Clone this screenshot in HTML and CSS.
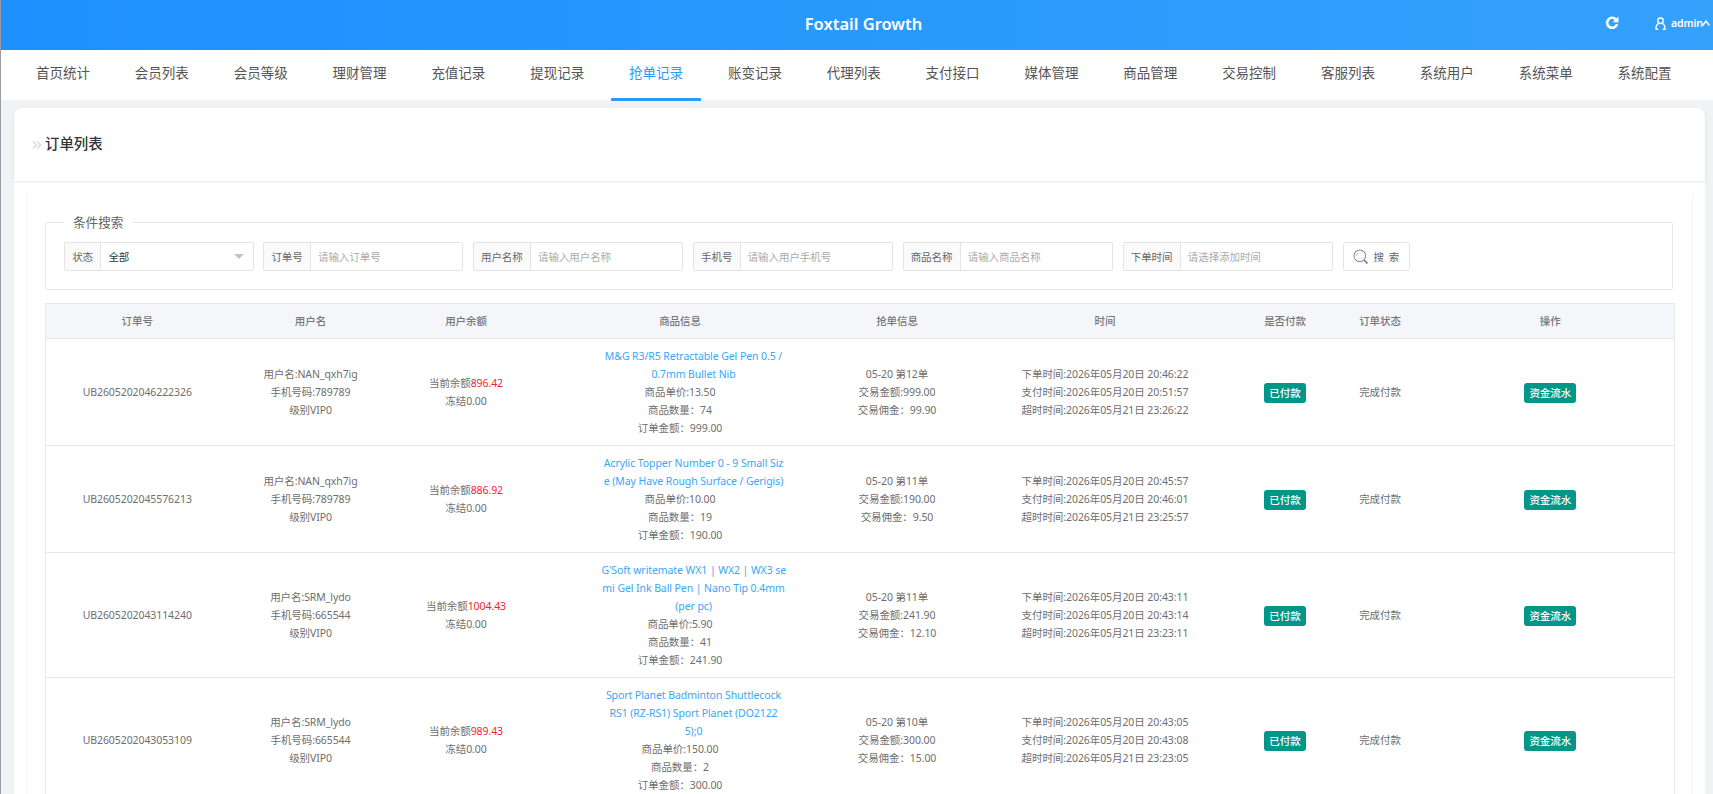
FILE: index.html
```html
<!DOCTYPE html>
<html lang="zh-CN">
<head>
  <meta charset="UTF-8">
  <title>Foxtail Growth</title>
  <link rel="stylesheet" href="styles.css">
</head>
<body>
  <div class="app">
    <header class="topbar">
      <div class="brand">Foxtail Growth</div>
      <div class="top-actions">
        <svg class="icon-refresh" viewBox="0 0 14 14"><path d="M11 3.600A5 5 0 1 0 12 8" fill="none" stroke="#fff" stroke-width="2.600"/><path d="M7.500 6.200h6V.5z" fill="#fff"/></svg>
        <svg class="icon-user" viewBox="0 0 12 14"><circle cx="6" cy="4" r="3" fill="none" stroke="#fff" stroke-width="1.500"/><path d="M1 13.500c0-3.500 1.600-6 3-6.600M11 13.500c0-3.500-1.600-6-3-6.600M1 13.300h2.500M8.500 13.300H11" fill="none" stroke="#fff" stroke-width="1.500"/></svg>
        <span class="user-name">admin</span>
        <svg class="icon-caret" viewBox="0 0 8 8"><path d="M.7 6.500 4 2l3.300 4.500" fill="none" stroke="#fff" stroke-width="1.500"/></svg>
      </div>
    </header>

    <nav class="tabs">
      <a>首页统计</a>
      <a>会员列表</a>
      <a>会员等级</a>
      <a>理财管理</a>
      <a>充值记录</a>
      <a>提现记录</a>
      <a class="active">抢单记录</a>
      <a>账变记录</a>
      <a>代理列表</a>
      <a>支付接口</a>
      <a>媒体管理</a>
      <a>商品管理</a>
      <a>交易控制</a>
      <a>客服列表</a>
      <a>系统用户</a>
      <a>系统菜单</a>
      <a>系统配置</a>
    </nav>

    <main class="content">
      <div class="card-head">
        <svg class="crumb" viewBox="0 0 10 10"><path d="M1 1.500 4.500 5 1 8.500M5 1.500 8.500 5 5 8.500" fill="none" stroke="#b5b5b5" stroke-width="1"/></svg>
        <h1>订单列表</h1>
      </div>
      <div class="card-body">
        <div class="panel">
          <fieldset class="search">
            <legend>条件搜索</legend>
            <div class="search-row">
              <div class="field">
                <span class="field-label">状态</span>
                <div class="field-input select">全部<i class="select-arrow"></i></div>
              </div>
              <div class="field">
                <span class="field-label">订单号</span>
                <div class="field-input placeholder">请输入订单号</div>
              </div>
              <div class="field">
                <span class="field-label">用户名称</span>
                <div class="field-input placeholder">请输入用户名称</div>
              </div>
              <div class="field">
                <span class="field-label">手机号</span>
                <div class="field-input placeholder">请输入用户手机号</div>
              </div>
              <div class="field">
                <span class="field-label">商品名称</span>
                <div class="field-input placeholder">请输入商品名称</div>
              </div>
              <div class="field">
                <span class="field-label">下单时间</span>
                <div class="field-input placeholder">请选择添加时间</div>
              </div>
              <button class="btn-search">
                <svg viewBox="0 0 16 16"><circle cx="6.800" cy="6.800" r="5.800" fill="none" stroke="#8a8f99" stroke-width="1.100"/><path d="M3.500 6.800a3.300 3.300 0 0 1 1.500-2.800" fill="none" stroke="#9fc3e6" stroke-width="1"/><path d="m11 11 3.500 3.500" stroke="#8a8f99" stroke-width="1.900"/></svg>
                <span>搜 索</span>
              </button>
            </div>
          </fieldset>

          <table class="orders">
            <thead>
              <tr>
                <th class="col-no">订单号</th>
                <th class="col-user">用户名</th>
                <th class="col-balance">用户余额</th>
                <th class="col-goods">商品信息</th>
                <th class="col-grab">抢单信息</th>
                <th class="col-time">时间</th>
                <th class="col-paid">是否付款</th>
                <th class="col-state">订单状态</th>
                <th class="col-op">操作</th>
              </tr>
            </thead>
            <tbody>
              <tr>
                <td>UB2605202046222326</td>
                <td>用户名:NAN_qxh7ig<br>手机号码:789789<br>级别VIP0</td>
                <td>当前余额<span class="money">896.42</span><br>冻结0.00</td>
                <td><a class="goods-name">M&amp;G R3/R5 Retractable Gel Pen 0.5 /<br>0.7mm Bullet Nib</a>商品单价:13.50<br>商品数量：74<br>订单金额：999.00</td>
                <td>05-20 第12单<br>交易金额:999.00<br>交易佣金：99.90</td>
                <td>下单时间:2026年05月20日 20:46:22<br>支付时间:2026年05月20日 20:51:57<br>超时时间:2026年05月21日 23:26:22</td>
                <td><span class="tag">已付款</span></td>
                <td>完成付款</td>
                <td><span class="tag">资金流水</span></td>
              </tr>
              <tr>
                <td>UB2605202045576213</td>
                <td>用户名:NAN_qxh7ig<br>手机号码:789789<br>级别VIP0</td>
                <td>当前余额<span class="money">886.92</span><br>冻结0.00</td>
                <td><a class="goods-name">Acrylic Topper Number 0 - 9 Small Siz<br>e (May Have Rough Surface / Gerigis)</a>商品单价:10.00<br>商品数量：19<br>订单金额：190.00</td>
                <td>05-20 第11单<br>交易金额:190.00<br>交易佣金：9.50</td>
                <td>下单时间:2026年05月20日 20:45:57<br>支付时间:2026年05月20日 20:46:01<br>超时时间:2026年05月21日 23:25:57</td>
                <td><span class="tag">已付款</span></td>
                <td>完成付款</td>
                <td><span class="tag">资金流水</span></td>
              </tr>
              <tr>
                <td>UB2605202043114240</td>
                <td>用户名:SRM_lydo<br>手机号码:665544<br>级别VIP0</td>
                <td>当前余额<span class="money">1004.43</span><br>冻结0.00</td>
                <td><a class="goods-name">G'Soft writemate WX1 | WX2 | WX3 se<br>mi Gel Ink Ball Pen | Nano Tip 0.4mm<br>(per pc)</a>商品单价:5.90<br>商品数量：41<br>订单金额：241.90</td>
                <td>05-20 第11单<br>交易金额:241.90<br>交易佣金：12.10</td>
                <td>下单时间:2026年05月20日 20:43:11<br>支付时间:2026年05月20日 20:43:14<br>超时时间:2026年05月21日 23:23:11</td>
                <td><span class="tag">已付款</span></td>
                <td>完成付款</td>
                <td><span class="tag">资金流水</span></td>
              </tr>
              <tr>
                <td>UB2605202043053109</td>
                <td>用户名:SRM_lydo<br>手机号码:665544<br>级别VIP0</td>
                <td>当前余额<span class="money">989.43</span><br>冻结0.00</td>
                <td><a class="goods-name">Sport Planet Badminton Shuttlecock<br>RS1 (RZ-RS1) Sport Planet (DO2122<br>5);0</a>商品单价:150.00<br>商品数量：2<br>订单金额：300.00</td>
                <td>05-20 第10单<br>交易金额:300.00<br>交易佣金：15.00</td>
                <td>下单时间:2026年05月20日 20:43:05<br>支付时间:2026年05月20日 20:43:08<br>超时时间:2026年05月21日 23:23:05</td>
                <td><span class="tag">已付款</span></td>
                <td>完成付款</td>
                <td><span class="tag">资金流水</span></td>
              </tr>
            </tbody>
          </table>
        </div>
      </div>
    </main>
  </div>
</body>
</html>
```

FILE: styles.css
```css
/* reset */
* {
  box-sizing: border-box;
}
html,
body {
  margin: 0;
  height: 100%;
  overflow: hidden;
}
body {
  background: #f0f2f6;
  color: #6e6e6e;
  font-family: "Noto Sans", "Noto Sans CJK SC", sans-serif;
  font-size: 10.5px;
  letter-spacing: -0.08px;
}
/* page */
.app {
  height: 100vh;
  overflow: hidden;
  border-left: 1px solid #9b9ba1;
}
.topbar {
  position: relative;
  display: flex;
  align-items: center;
  justify-content: center;
  height: 50px;
  padding: 0 0 3px 13px;
  background: linear-gradient(90deg, #1e90ff, #34a1fb);
  color: #fff;
}
.brand {
  font-size: 16.500px;
  font-weight: 600;
  letter-spacing: 0;
}
.top-actions {
  position: absolute;
  top: 0;
  right: 3px;
  display: flex;
  align-items: center;
  height: 46px;
  font-weight: 600;
}
.icon-refresh {
  width: 14px;
  height: 14px;
  margin-right: 36px;
}
.icon-user {
  width: 11px;
  height: 13px;
  margin-right: 5px;
}
.icon-caret {
  width: 8px;
  height: 8px;
  margin-left: -1px;
}
/* tabs */
.tabs {
  display: flex;
  gap: 8.850px;
  height: 50px;
  padding-left: 17px;
  background: #fff;
  letter-spacing: 0;
}
.tabs a {
  width: 90px;
  height: 51px;
  line-height: 47px;
  text-align: center;
  font-size: 13.500px;
  color: #555;
}
.tabs a.active {
  color: #2b9bfa;
  border-bottom: 3px solid #2b9bfa;
}
/* content */
.content {
  margin: 8px 8px 0 13px;
}
.card-head {
  position: relative;
  display: flex;
  align-items: center;
  height: 73px;
  padding: 0 0 5px 18px;
  background: #fff;
  border-radius: 8px 8px 0 0;
  box-shadow: 0 1px 3px rgba(0, 0, 0, 0.1);
}
.card-head h1 {
  margin: 0;
  font-size: 14.400px;
  font-weight: 500;
  letter-spacing: 0;
  color: #333;
}
.crumb {
  width: 10px;
  height: 10px;
  margin: 5px 3px 0 0;
}
.card-body {
  padding: 12px 12px 0;
  background: #fff;
}
.panel {
  padding: 18.500px 19px 0 18px;
  border-left: 1px solid #f6f6f6;
  border-right: 1px solid #f6f6f6;
}
/* search */
.search {
  margin: 0 0 13px;
  padding: 8.500px 18px 18px;
  border: 1px solid #e8e8e8;
  border-radius: 2px;
}
.search legend {
  padding: 0 9px 3px;
  font-size: 12.600px;
  letter-spacing: 0;
  color: #666;
}
.search-row {
  display: flex;
  gap: 9.600px;
}
.field {
  display: flex;
  height: 29px;
  border: 1px solid #e4e4e4;
  border-radius: 2px;
}
.field-label {
  padding: 0 7.200px;
  line-height: 29px;
  background: #fafafa;
  border-right: 1px solid #e4e4e4;
  color: #666;
}
.field-input {
  position: relative;
  width: 151.400px;
  padding-left: 7.200px;
  line-height: 29px;
}
.placeholder {
  color: #aaa;
}
.select {
  color: #333;
}
.select-arrow {
  position: absolute;
  top: 11px;
  right: 9px;
  border: 5px solid transparent;
  border-top-color: #c2c2c2;
  border-bottom-width: 0;
}
.btn-search {
  display: flex;
  align-items: center;
  gap: 5px;
  height: 29px;
  padding: 0 9px;
  background: #fff;
  border: 1px solid #e4e4e4;
  border-radius: 3px;
  color: #666;
  font: inherit;
  letter-spacing: 1px;
}
.btn-search svg {
  width: 16px;
  height: 16px;
}
/* table */
.orders {
  width: 1629px;
  table-layout: fixed;
  border-collapse: collapse;
  text-align: center;
}
.orders th,
.orders td {
  border: 1px solid #e8e8e8;
  border-width: 1px 0;
  line-height: 18px;
  padding: 8px 0;
}
.orders th {
  height: 35px;
  background: #f5f6fa;
  font-weight: 500;
  color: #777;
}
.orders tr > :first-child {
  border-left-width: 1px;
}
.orders tr > :last-child {
  border-right-width: 1px;
}
.col-no { width: 183px; }
.col-user { width: 164px; }
.col-balance { width: 147px; }
.col-goods { width: 281px; }
.col-grab { width: 153px; }
.col-time { width: 263px; }
.col-paid { width: 97px; }
.col-state { width: 93px; }
.col-op { width: 248px; }
.goods-name {
  display: block;
  width: 184px;
  margin-left: 62px;
  color: #3ba5f7;
  white-space: nowrap;
}
.money {
  color: #f5222d;
}
.tag {
  display: inline-block;
  height: 20px;
  margin-top: 1px;
  padding: 0 5px;
  line-height: 20px;
  background: #009688;
  border-radius: 3px;
  color: #fff;
  font-weight: 500;
}
```
